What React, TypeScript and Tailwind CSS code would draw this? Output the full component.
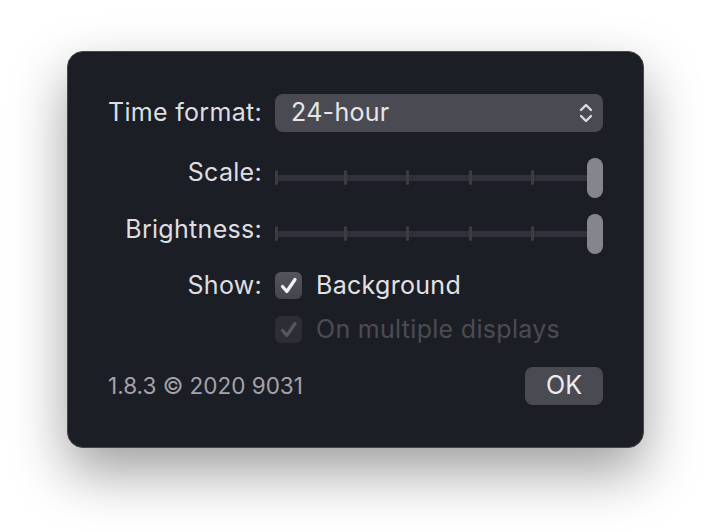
import React from 'react';

const font = { fontFamily: 'Inter, "Noto Sans", sans-serif' };

function Chevrons() {
  return (
    <svg width="16" height="24" viewBox="0 0 16 24" fill="none" stroke="#dcdce0" strokeWidth="2.4" strokeLinecap="round" strokeLinejoin="round">
      <path d="M3 9 L8 4 L13 9" />
      <path d="M3 15 L8 20 L13 15" />
    </svg>
  );
}

function Check({ color }: { color: string }) {
  return (
    <svg width="20" height="20" viewBox="0 0 20 20" fill="none" stroke={color} strokeWidth="3.2" strokeLinecap="round" strokeLinejoin="round">
      <path d="M3.5 10.5 L7.8 15.5 L16 3.5" />
    </svg>
  );
}

function Slider() {
  const ticks = [0, 69, 131, 194, 256];
  return (
    <div className="relative h-[40px] w-[328px]">
      <div className="absolute left-[1px] right-[8px] top-[17px] h-[6px] rounded-full bg-[#30313a]" />
      {ticks.map((x) => (
        <div key={x} className="absolute top-[12px] h-[15px] w-[3px] rounded-full bg-[#3b3c44]" style={{ left: x }} />
      ))}
      <div className="absolute right-0 top-0 h-[40px] w-[16px] rounded-full bg-[#85858d]" />
    </div>
  );
}

function Label({ children }: { children: React.ReactNode }) {
  return <div className="text-right text-[25px] tracking-[0.012em] text-[#dedee0]">{children}</div>;
}

export default function App() {
  return (
    <div className="h-[532px] w-[712px] overflow-hidden bg-white pl-[67px] pt-[51px]" style={font}>
      <div className="flex h-[397px] w-[577px] flex-col rounded-[16px] border border-[#46474d] bg-[#1c1e26] px-[40px] pt-[42px] shadow-[0_24px_55px_rgba(0,0,0,0.38)]">
        <div className="grid grid-cols-[154px_328px] items-center gap-x-[13px]">
          <div className="flex h-[38px] items-center justify-end">
            <Label>Time format:</Label>
          </div>
          <div className="flex h-[38px] items-center justify-between rounded-[8px] bg-[#4a4a52] pl-[16px] pr-[9px] text-[25px] tracking-[0.012em] text-[#e6e6e8]">
            <span>24-hour</span>
            <Chevrons />
          </div>

          <div className="mt-[26px] flex h-[40px] items-center justify-end pb-[10px]">
            <Label>Scale:</Label>
          </div>
          <div className="mt-[26px]">
            <Slider />
          </div>

          <div className="mt-[16px] flex h-[40px] items-center justify-end pb-[8px]">
            <Label>Brightness:</Label>
          </div>
          <div className="mt-[16px]">
            <Slider />
          </div>

          <div className="mt-[18px] flex h-[27px] items-center justify-end">
            <Label>Show:</Label>
          </div>
          <div className="mt-[18px] flex h-[27px] items-center gap-[14px]">
            <div className="flex h-[27px] w-[27px] items-center justify-center rounded-[6px] bg-gradient-to-b from-[#55555d] to-[#44454c]">
              <Check color="#f4f4f6" />
            </div>
            <span className="text-[25px] tracking-[0.012em] text-[#e2e2e4]">Background</span>
          </div>

          <div className="mt-[17px] h-[27px]" />
          <div className="mt-[17px] flex h-[27px] items-center gap-[14px]">
            <div className="flex h-[27px] w-[27px] items-center justify-center rounded-[6px] bg-[#2d2e35]">
              <Check color="#56575e" />
            </div>
            <span className="text-[25px] tracking-[0.012em] text-[#4b4c53]">On multiple displays</span>
          </div>
        </div>

        <div className="mt-[24px] flex items-center justify-between">
          <span className="text-[22.5px] text-[#a3a3a8]">1.8.3 © 2020 9031</span>
          <button className="flex h-[38px] w-[78px] items-center justify-center rounded-[8px] bg-[#4a4a52] text-[25px] text-[#ececee]">
            OK
          </button>
        </div>
      </div>
    </div>
  );
}
